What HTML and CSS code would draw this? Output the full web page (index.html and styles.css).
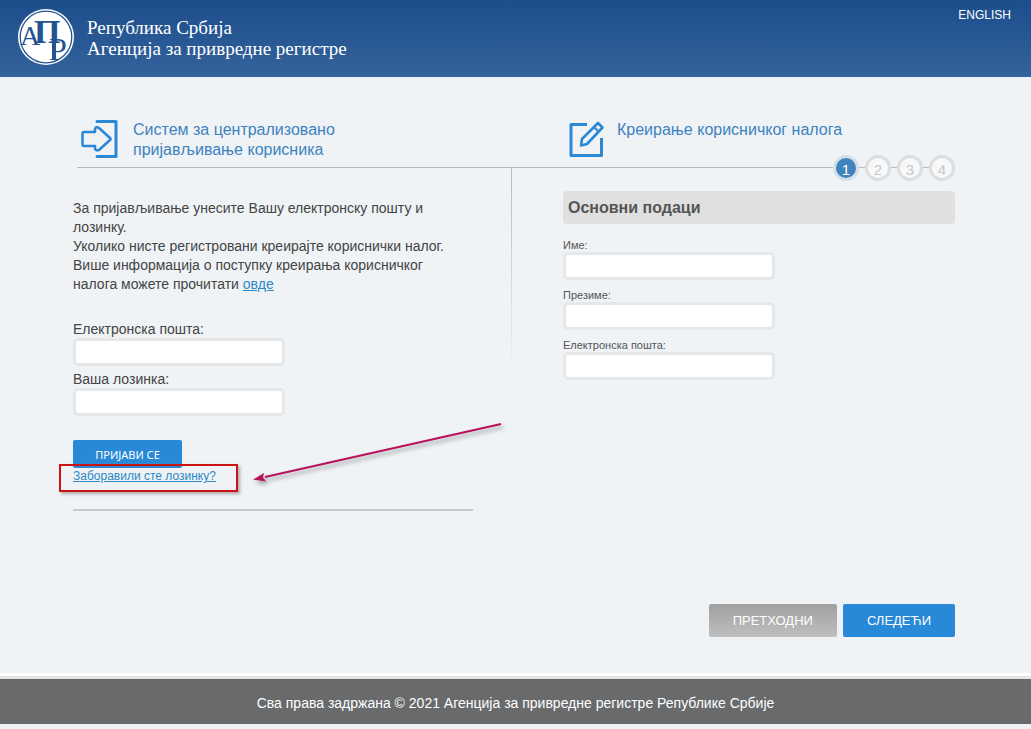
FILE: index.html
```html
<!DOCTYPE html>
<html lang="sr">
<head>
    <meta charset="UTF-8">
    <meta name="viewport" content="width=device-width, initial-scale=1.0">
    <title>Агенција за привредне регистре</title>
    <link rel="stylesheet" href="styles.css">
</head>
<body>
    <header class="header">
        <svg class="logo" viewBox="0 0 58 58" aria-hidden="true">
            <circle cx="29" cy="29" r="28" fill="#fff"/>
            <circle cx="29" cy="29" r="25.8" fill="none" stroke="#24548f" stroke-width="1.3"/>
            <g class="logo-letters">
                <text x="3" y="37" font-size="28">А</text>
                <text x="17" y="35" font-size="34" font-weight="bold">П</text>
                <text x="32" y="52" font-size="32">Р</text>
            </g>
            <path d="M35 14H39V51H35Z" fill="#24548f"/>
        </svg>
        <div class="brand">Република Србија<br>Агенција за привредне регистре</div>
        <a class="lang" href="#">ENGLISH</a>
    </header>

    <main class="main">
        <div class="heads">
            <div class="head">
                <svg class="icon" viewBox="0 0 38 38" fill="none" stroke="#2b88d4" stroke-width="3" stroke-linejoin="round" stroke-linecap="round" aria-hidden="true">
                    <path d="M16 1.5H35V36.500H16"/>
                    <path d="M3 12H14V9Q15 6 18 8L29 18Q30 19 29 20L18 30Q15 31 14 29V26H3Q1.500 26 1.500 24V14Q1.500 12 3 12Z" stroke-width="2.600"/>
                </svg>
                <h1>Систем за централизовано<br>пријављивање корисника</h1>
            </div>
            <div class="head head-right">
                <svg class="icon" viewBox="0 0 38 38" fill="none" stroke="#2b88d4" stroke-width="3" stroke-linejoin="round" aria-hidden="true">
                    <path d="M20 4.500H4V35.500H34.500V18"/>
                    <path d="M14 25.500L15 19L31 3L35.500 7.500L20 24Z" stroke-width="2.600"/>
                    <path d="M27 7L32 12" stroke-width="2"/>
                </svg>
                <h1>Креирање корисничког налога</h1>
            </div>
            <ol class="steps">
                <li class="active">1</li>
                <li>2</li>
                <li>3</li>
                <li>4</li>
            </ol>
        </div>

        <div class="columns">
            <form class="login">
                <div class="intro">
                    <p>За пријављивање унесите Вашу електронску пошту и лозинку.</p>
                    <p>Уколико нисте регистровани креирајте кориснички налог.</p>
                    <p>Више информација о поступку креирања корисничког налога можете прочитати <a href="#">овде</a></p>
                </div>
                <div class="field">
                    <label for="login-email">Електронска пошта:</label>
                    <input type="email" id="login-email">
                </div>
                <div class="field">
                    <label for="password">Ваша лозинка:</label>
                    <input type="password" id="password">
                </div>
                <button type="button" class="btn btn-login">ПРИЈАВИ СЕ</button>
                <div class="forgot">
                    <a href="#">Заборавили сте лозинку?</a>
                    <span class="marker"></span>
                    <svg class="arrow" width="258" height="72" viewBox="0 0 258 72" aria-hidden="true">
                        <path d="M250 6L14 59" stroke="#b8125c" stroke-width="2" fill="none"/>
                        <path d="M2 61.500L13 55L12 59.500L15 63.500Z" fill="#b8125c"/>
                    </svg>
                </div>
                <hr>
            </form>

            <form class="register">
                <h2>Основни подаци</h2>
                <div class="field">
                    <label for="first-name">Име:</label>
                    <input type="text" id="first-name">
                </div>
                <div class="field">
                    <label for="last-name">Презиме:</label>
                    <input type="text" id="last-name">
                </div>
                <div class="field">
                    <label for="email">Електронска пошта:</label>
                    <input type="email" id="email">
                </div>
                <div class="actions">
                    <button type="button" class="btn btn-prev">ПРЕТХОДНИ</button>
                    <button type="button" class="btn">СЛЕДЕЋИ</button>
                </div>
            </form>
        </div>
    </main>

    <footer class="footer">Сва права задржана © 2021 Агенција за привредне регистре Републике Србије</footer>
</body>
</html>
```
FILE: styles.css
```css
* {
    box-sizing: border-box;
}
body {
    margin: 0;
    background-color: #eff3f6;
    color: #444;
    font-family: "Liberation Sans", Arial, sans-serif;
    font-size: 14px;
}
h1, h2, p {
    margin: 0;
}
a {
    color: #2b88c8;
}
.header {
    display: flex;
    align-items: flex-start;
    height: 77px;
    padding: 8px 20px 0 17px;
    background: linear-gradient(#1c4e8c, #34629b);
    color: #fff;
}
.logo {
    width: 58px;
    height: 58px;
}
.logo-letters {
    fill: #24548f;
    font-family: "Liberation Serif", serif;
}
.brand {
    flex: 1;
    padding: 9px 0 0 12px;
    font-family: Georgia, "Liberation Serif", serif;
    font-size: 19px;
    line-height: 21px;
}
.lang {
    color: #fff;
    font-size: 12px;
    line-height: 14px;
    text-decoration: none;
}
.main {
    padding: 43px 76px 36px 73px;
}
.heads, .columns {
    display: grid;
    grid-template-columns: 439fr 443fr;
}
.heads {
    position: relative;
    height: 48px;
    margin-left: 4px;
    border-bottom: 1px solid #b5babb;
}
.head {
    display: flex;
    gap: 14px;
    padding-left: 4px;
}
.head-right {
    padding-left: 53px;
    gap: 12px;
}
.head h1 {
    color: #3e82c0;
    font-size: 16px;
    font-weight: normal;
    line-height: 20px;
}
.icon {
    flex: none;
    width: 38px;
    height: 38px;
}
.steps {
    position: absolute;
    right: 0;
    bottom: -14px;
    display: flex;
    gap: 6px;
    margin: 0;
    padding: 0;
    list-style: none;
}
.steps li {
    width: 26px;
    height: 26px;
    border: 3px solid #dcdedf;
    border-radius: 50%;
    background-color: #f7f8f9;
    color: #c8c8c8;
    font-size: 15px;
    line-height: 23px;
    text-align: center;
}
.steps .active {
    border-color: #d5dfe8;
    background-color: #4083bd;
    color: #fff;
}
.login {
    padding-top: 31px;
    background: linear-gradient(#b5babb, #eff3f6) right top / 1px 210px no-repeat;
}
.intro {
    max-width: 390px;
    margin-bottom: 27px;
    line-height: 19px;
}
.field label {
    display: block;
    line-height: 17px;
}
.field input {
    display: block;
    width: 212px;
    height: 28px;
    margin-bottom: 5px;
    padding: 2px 6px;
    border: 3px solid #e5e7e8;
    border-radius: 5px;
    background-color: #fff;
}
.btn {
    height: 33px;
    padding: 0 24px;
    border: none;
    border-radius: 2px;
    background-color: #2889d8;
    color: #fff;
    font-family: inherit;
    font-size: 13px;
    cursor: pointer;
}
.btn-login {
    display: block;
    width: 109px;
    height: 28px;
    margin-top: 24px;
    padding: 0;
    font-family: Tahoma, "Noto Sans", sans-serif;
    font-size: 11px;
}
.btn-prev {
    background: linear-gradient(#a0a0a0, #bfbfbf);
}
.forgot {
    position: relative;
    font-size: 12px;
    line-height: 16px;
}
.marker {
    position: absolute;
    left: -14px;
    top: -4px;
    width: 179px;
    height: 28px;
    border: 2px solid #cc1212;
    box-shadow: 2px 2px 3px #aaa;
}
.arrow {
    position: absolute;
    left: 178px;
    top: -50px;
    filter: drop-shadow(2px 3px 2px #999);
}
.login hr {
    max-width: 400px;
    height: 2px;
    margin: 25px 0 0;
    border: none;
    background-color: #c6cacd;
}
.register {
    padding: 23px 0 0 51px;
}
.register h2 {
    margin-bottom: 14px;
    padding: 0 5px;
    border-radius: 4px;
    background-color: #e0e0e0;
    color: #555;
    font-size: 16px;
    line-height: 33px;
}
.register .field label {
    color: #555;
    font-size: 11px;
    line-height: 14px;
}
.register .field input {
    margin-bottom: 8px;
}
.actions {
    display: flex;
    justify-content: flex-end;
    gap: 6px;
    margin-top: 224px;
}
.footer {
    margin-top: 3px;
    padding: 15px 0 12px;
    border-top: 3px solid #e2e4e6;
    background-color: #686a6c;
    box-shadow: 0 -3px #fff;
    color: #fff;
    line-height: 18px;
    text-align: center;
}
```
